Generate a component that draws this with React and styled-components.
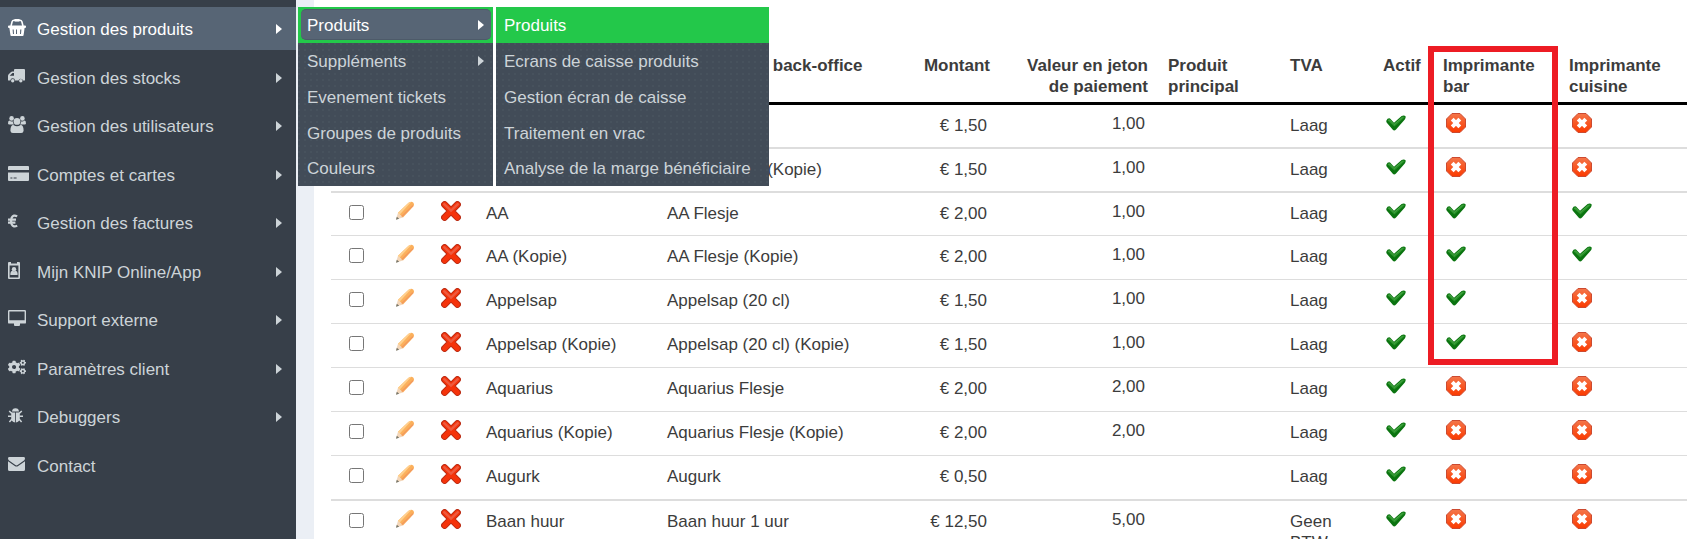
import styled, { createGlobalStyle } from "styled-components";
import { FaCogs } from "react-icons/fa";

const GlobalStyle = createGlobalStyle`
  * { box-sizing: border-box; }
  body {
    margin: 0;
    font: 17px/21px "Liberation Sans", Arial, sans-serif;
    color: #3c3c3c;
    background: #ebeff5;
  }
  a { text-decoration: none; color: inherit; }
`;

const Page = styled.div`
  display: flex;
  height: 100vh;
  overflow: hidden;
`;

const Sidebar = styled.nav`
  flex: 0 0 296px;
  position: relative;
  z-index: 2;
  padding-top: 7px;
  background: #373f49;
`;

const Item = styled.a`
  display: flex;
  align-items: center;
  height: 43px;
  padding: 0 14px 0 8px;
  margin-bottom: 5px;
  color: ${(props) => (props.$active ? "#fff" : "#cdd4d8")};
  background: ${(props) => (props.$active ? "#576575" : "none")};
  &:nth-of-type(odd) { margin-bottom: 6px; }
`;

const ItemIcon = styled.span`
  display: flex;
  width: 29px;
  padding-bottom: 3px;
  svg { display: block; }
`;

const ItemLabel = styled.span`
  flex: 1;
  padding-top: 1px;
`;

const Flyout = styled.div`
  position: absolute;
  top: 7px;
  left: 298px;
  display: flex;
  gap: 3px;
  background: #fff;
`;

const Menu = styled.div`
  min-width: ${(props) => props.$width};
  color: #cdd4d8;
  background-color: #424c58;
  background-image: radial-gradient(circle at 1px 1px, #47525d 1px, transparent 1px);
  background-size: 6px 6px;
`;

const MenuItem = styled.a`
  display: flex;
  align-items: center;
  justify-content: space-between;
  height: 36px;
  padding: 0 9px 0 ${(props) => props.$left || "8px"};
  white-space: nowrap;
  color: ${(props) => (props.$active ? "#fff" : "inherit")};
  background: ${(props) => (props.$active ? "#23c84a" : "none")};
  &:last-child { height: 35px; }
`;

const OpenItem = styled(MenuItem)`
  padding: 2px 2px 3px 3px;
`;

const OpenLabel = styled.span`
  flex: 1;
  align-self: stretch;
  display: flex;
  align-items: center;
  justify-content: space-between;
  padding: 1px 7px 0 6px;
  border: 1px solid #4d5a69;
  border-width: 1px 0;
  border-radius: 5px;
  background: #576575;
`;

const Content = styled.main`
  flex: 1;
  min-width: 0;
  margin-left: 18px;
  padding: 54px 0 0 17px;
  background: #fff;
`;

const Table = styled.table`
  width: 100%;
  table-layout: fixed;
  border-collapse: separate;
  border-spacing: 0;
`;

const Th = styled.th`
  position: relative;
  height: 51px;
  padding: 1px 10px 0;
  vertical-align: top;
  text-align: ${(props) => props.$align || "left"};
  border-bottom: 3px solid #000;
  a { color: #337ab7; }
`;

const Row = styled.tr`
  --top: 10px;
  td { border-top: ${(props) => (props.$heavy ? "2px" : "1px")} solid #ddd; }
  &:first-child td { height: 42px; border-top: 0; }
`;

const Td = styled.td`
  height: 44px;
  padding: var(--top) 10px 0;
  vertical-align: top;
`;

const AmountTd = styled(Td)`
  padding-right: 13px;
  text-align: right;
`;

const TokenTd = styled(AmountTd)`
  padding-top: calc(var(--top) - 2px);
`;

const IconTd = styled(Td)`
  padding: calc(var(--top) - 2px) 0 0 ${(props) => props.$left || "13px"};
  svg { display: block; }
`;

const CheckTd = styled(Td)`
  padding: calc(var(--top) + 2px) 0 0 18px;
`;

const Checkbox = styled.input`
  display: block;
  width: 15px;
  height: 15px;
  margin: 0;
`;

const IconButton = styled.button`
  display: block;
  padding: 0;
  border: 0;
  background: none;
  cursor: pointer;
`;

/* frame drawn over the bar printer column */
const Highlight = styled.div`
  position: absolute;
  top: -8px;
  left: -5px;
  right: 1px;
  height: 319px;
  border: 6px solid #ed1c24;
  z-index: 1;
`;

const Glyph = ({ w, h, children }) => (
  <svg width={w} height={h} viewBox={`0 0 ${w} ${h}`} fill="currentColor" aria-hidden="true">
    {children}
  </svg>
);

const Caret = () => (
  <Glyph w={6} h={12}>
    <path d="M0 1v10l6-5Z" />
  </Glyph>
);

const Basket = () => (
  <Glyph w={18} h={17}>
    <path d="M3 7 4.2 2.4Q4.6 1.2 6 1.2H12Q13.4 1.2 13.8 2.4L15 7" fill="none" stroke="currentColor" strokeWidth="1.6" />
    <path d="M6.5 0h5v2.6h-5Z" />
    <path fillRule="evenodd" d="M1 6.5h16a1 1 0 0 1 1 1v.6a1 1 0 0 1-1 1h-.4L15.6 16a1 1 0 0 1-1 1H3.4a1 1 0 0 1-1-1L1.4 9.1H1a1 1 0 0 1-1-1v-.6a1 1 0 0 1 1-1ZM4.6 10.4 5 15h1l-.3-4.6ZM8 10.4V15h1v-4.6ZM12.2 10.4 12 15h1l.4-4.6Z" />
  </Glyph>
);

const Truck = () => (
  <Glyph w={17} h={14}>
    <path fillRule="evenodd" d="M7 0h9q1 0 1 1v10q0 .6-.6.6H15A2.3 2.3 0 0 0 10.5 11.6H7A2.3 2.3 0 0 0 2.4 11.6H.6Q0 11.6 0 11V7q0-1 .7-1.7L3 3.1Q3.6 2.6 4.4 2.6H6V1q0-1 1-1ZM4.5 4 1.7 6.8H6V4Z" />
    <circle cx="4.7" cy="11.8" r="1.7" />
    <circle cx="12.8" cy="11.8" r="1.7" />
  </Glyph>
);

const Users = () => (
  <Glyph w={18} h={17}>
    <circle cx="3.6" cy="2.4" r="2.3" />
    <circle cx="14.4" cy="2.4" r="2.3" />
    <circle cx="9" cy="5.4" r="3.4" />
    <path d="M0 7.6Q0 4.6 1.4 4.6 3.4 6 4.7 5.2 4.8 7.2 6 8.6H1.4Q0 8.6 0 7.6ZM18 7.6Q18 4.6 16.6 4.6 14.6 6 13.3 5.2 13.2 7.2 12 8.6h4.6Q18 8.6 18 7.6ZM2.4 14.8Q2.4 9 5.4 9 9 11.6 12.6 9q3 0 3 5.8Q15.4 17 13.2 17H4.8Q2.6 17 2.4 14.8Z" />
  </Glyph>
);

const Card = () => (
  <Glyph w={21} h={15}>
    <path d="M1 0h19q1 0 1 1v3H0V1Q0 0 1 0Z" />
    <path fillRule="evenodd" d="M0 6.6h21V14q0 1-1 1H1q-1 0-1-1ZM2.4 11.4v1.2h2v-1.2ZM5.6 11.4v1.2h3v-1.2Z" />
  </Glyph>
);

const Euro = () => (
  <Glyph w={10} h={14}>
    <path d="M9.2 2.4Q5.4.2 3.6 3.8 2.6 7 3.6 10.2 5.4 13.8 9.2 11.6M0 5.6h8M0 8.6h7.4" fill="none" stroke="currentColor" strokeWidth="2.2" />
  </Glyph>
);

const Badge = () => (
  <Glyph w={12} h={17}>
    <path fillRule="evenodd" d="M1 0h2v1.4h6V0h2q1 0 1 1v15q0 1-1 1H1q-1 0-1-1V1Q0 0 1 0ZM1.6 3.4V15.4h8.8V3.4Z" />
    <circle cx="6" cy="7.2" r="2.2" />
    <path d="M2.4 13V11.2Q2.6 9 4.4 8.8q1.6 1 3.2 0 1.8.2 2 2.4V13Z" />
  </Glyph>
);

const Desktop = () => (
  <Glyph w={18} h={16}>
    <path fillRule="evenodd" d="M1.2 0h15.6Q18 0 18 1.2v11.2q0 1.2-1.2 1.2H12V15q0 1-1 1H7q-1 0-1-1v-1.4H1.2Q0 13.6 0 12.4V1.2Q0 0 1.2 0ZM1.4 1.4v8.8h15.2V1.4Z" />
  </Glyph>
);

const Bug = () => (
  <Glyph w={15} h={15}>
    <path d="M4 3.6Q4.2.2 7.5.2T11 3.6ZM3.2 4.6h3.9V14.4Q3.2 14 3.2 10ZM7.9 4.6h3.9V10q0 4-3.9 4.4Z" />
    <path d="M1.2 3 3.8 5.4M13.8 3l-2.6 2.4M0 8.2h3.6M15 8.2h-3.6M1.4 14 4 11M13.6 14 11 11" fill="none" stroke="currentColor" strokeWidth="1.5" />
  </Glyph>
);

const Envelope = () => (
  <Glyph w={17} h={14}>
    <path d="M1.4 0h14.2Q17 0 17 1.4 17 2.6 16 3.4L9.6 8Q8.5 8.8 7.4 8L1 3.4Q0 2.6 0 1.4 0 0 1.4 0Z" />
    <path d="M0 4.2 6.8 9q1.7 1 3.4 0L17 4.2v8.2Q17 14 15.4 14H1.6Q0 14 0 12.4Z" />
  </Glyph>
);

const Check = () => (
  <svg width="20" height="20" viewBox="0 0 20 20" role="img" aria-label="Oui">
    <path d="M.4 7.4Q1.6 4.8 4 5.4L8 9.8 15.6 3Q18.4 1.8 19.7 3.6 19.8 5.4 18.8 6.4L10 16.6Q8.2 18.2 6.8 16.8L.8 9.8Q0 8.6.4 7.4Z" fill="#0b7410" />
    <path d="M1.6 7.6Q2.4 6 3.8 6.6L8 11.2 16.2 3.8Q18 3.2 18.8 4.2L8.4 13.6Z" fill="#2a942b" />
    <path d="M2.4 7.2 3.8 7 8 11.4 16.6 4.2" fill="none" stroke="#55ab50" strokeWidth="0.8" />
  </svg>
);

const Stop = () => (
  <svg width="20" height="20" viewBox="0 0 20 20" role="img" aria-label="Non">
    <defs>
      <linearGradient id="stop" x1="0" y1="0" x2="0" y2="1">
        <stop offset="0" stopColor="#f4764a" />
        <stop offset="1" stopColor="#fb3a00" />
      </linearGradient>
    </defs>
    <path d="M6 .5h8L19.5 6v8L14 19.5H6L.5 14V6Z" fill="url(#stop)" stroke="#cc4a30" />
    <path d="m6.2 6.2 7.6 7.6m0-7.6-7.6 7.6" stroke="#fff" strokeWidth="4" />
  </svg>
);

const Pencil = () => (
  <svg width="20" height="20" viewBox="0 0 20 20">
    <path d="M1 18.6 3 11.8 8 16.4Z" fill="#f2d6ba" />
    <path d="M1 18.8 1.8 15.8 4.2 17.8Z" fill="#77766a" />
    <path d="M3 11.8 13.6 1.8Q16.2-.2 18.2 1.4 19.8 3.6 18 5.8L8 16.4Z" fill="#fbb05c" />
    <path d="M3 11.8 13.6 1.8Q15 .7 16.2 1L4.8 13.4Z" fill="#ffd08e" />
    <path d="M6.8 15.4 18 4.6" stroke="#f39a5e" strokeWidth="1.4" />
  </svg>
);

const Cross = () => (
  <svg width="20" height="20" viewBox="0 0 20 20">
    <path d="M3.6 3.6 16.4 16.4M16.4 3.6 3.6 16.4" stroke="#bb2c14" strokeWidth="7" strokeLinecap="round" />
    <path d="M3.6 3.6 16.4 16.4M16.4 3.6 3.6 16.4" stroke="#f5330a" strokeWidth="5" strokeLinecap="round" />
    <path d="m3.2 3.2 6.8 6.4 6.8-6.4" fill="none" stroke="#ee5a3e" strokeWidth="2.4" strokeLinecap="round" />
  </svg>
);

const sections = [
  { label: "Gestion des produits", icon: <Basket />, active: true },
  { label: "Gestion des stocks", icon: <Truck /> },
  { label: "Gestion des utilisateurs", icon: <Users /> },
  { label: "Comptes et cartes", icon: <Card /> },
  { label: "Gestion des factures", icon: <Euro /> },
  { label: "Mijn KNIP Online/App", icon: <Badge /> },
  { label: "Support externe", icon: <Desktop /> },
  { label: "Paramètres client", icon: <FaCogs size={18} /> },
  { label: "Debuggers", icon: <Bug /> },
  { label: "Contact", icon: <Envelope />, leaf: true },
];

const products = [
  ["7-Up", "7-Up Flesjes", "€ 1,50", "1,00", "Laag", 0, 0],
  ["7-Up (Kopie)", "7-Up Flesjes (Kopie)", "€ 1,50", "1,00", "Laag", 0, 0],
  ["AA", "AA Flesje", "€ 2,00", "1,00", "Laag", 1, 1],
  ["AA (Kopie)", "AA Flesje (Kopie)", "€ 2,00", "1,00", "Laag", 1, 1],
  ["Appelsap", "Appelsap (20 cl)", "€ 1,50", "1,00", "Laag", 1, 0],
  ["Appelsap (Kopie)", "Appelsap (20 cl) (Kopie)", "€ 1,50", "1,00", "Laag", 1, 0],
  ["Aquarius", "Aquarius Flesje", "€ 2,00", "2,00", "Laag", 0, 0],
  ["Aquarius (Kopie)", "Aquarius Flesje (Kopie)", "€ 2,00", "2,00", "Laag", 0, 0],
  ["Augurk", "Augurk", "€ 0,50", "", "Laag", 0, 0],
  ["Baan huur", "Baan huur 1 uur", "€ 12,50", "5,00", "Geen BTW", 0, 0],
];

const heavyRows = [1, 2, 9];
const columns = [54, 46, 45, 181, 233, 110, 158, 122, 93, 60, 126];

export default function App() {
  return (
    <>
      <GlobalStyle />
      <Page>
        <Sidebar>
          {sections.map((s) => (
            <Item key={s.label} href="#" $active={s.active}>
              <ItemIcon>{s.icon}</ItemIcon>
              <ItemLabel>{s.label}</ItemLabel>
              {!s.leaf && <Caret />}
            </Item>
          ))}
          <Flyout>
            <Menu $width="195px">
              <OpenItem href="#" $active>
                <OpenLabel>Produits <Caret /></OpenLabel>
              </OpenItem>
              <MenuItem href="#" $left="9px">
                Suppléments <Caret />
              </MenuItem>
              <MenuItem href="#" $left="9px">Evenement tickets</MenuItem>
              <MenuItem href="#" $left="9px">Groupes de produits</MenuItem>
              <MenuItem href="#" $left="9px">Couleurs</MenuItem>
            </Menu>
            <Menu $width="273px">
              <MenuItem href="#" $active>Produits</MenuItem>
              <MenuItem href="#">Ecrans de caisse produits</MenuItem>
              <MenuItem href="#">Gestion écran de caisse</MenuItem>
              <MenuItem href="#">Traitement en vrac</MenuItem>
              <MenuItem href="#">Analyse de la marge bénéficiaire</MenuItem>
            </Menu>
          </Flyout>
        </Sidebar>
        <Content>
          <Table>
            <colgroup>
              {columns.map((width, i) => (
                <col key={i} width={width} />
              ))}
              <col />
            </colgroup>
            <thead>
              <tr>
                <Th />
                <Th />
                <Th />
                <Th><a href="#">Nom</a></Th>
                <Th>Nom produit back-office</Th>
                <Th $align="right">Montant</Th>
                <Th $align="right">Valeur en jeton de paiement</Th>
                <Th>Produit principal</Th>
                <Th>TVA</Th>
                <Th>Actif</Th>
                <Th>
                  Imprimante bar
                  <Highlight />
                </Th>
                <Th>Imprimante cuisine</Th>
              </tr>
            </thead>
            <tbody>
              {products.map(([name, office, amount, token, vat, bar, kitchen], i) => (
                <Row key={name} $heavy={heavyRows.includes(i)}>
                  <CheckTd><Checkbox type="checkbox" aria-label={name} /></CheckTd>
                  <IconTd $left="10px">
                    <IconButton aria-label="Modifier"><Pencil /></IconButton>
                  </IconTd>
                  <IconTd $left="10px">
                    <IconButton aria-label="Supprimer"><Cross /></IconButton>
                  </IconTd>
                  <Td>{name}</Td>
                  <Td>{office}</Td>
                  <AmountTd>{amount}</AmountTd>
                  <TokenTd>{token}</TokenTd>
                  <Td />
                  <Td>{vat}</Td>
                  <IconTd><Check /></IconTd>
                  <IconTd>{bar ? <Check /> : <Stop />}</IconTd>
                  <IconTd>{kitchen ? <Check /> : <Stop />}</IconTd>
                </Row>
              ))}
            </tbody>
          </Table>
        </Content>
      </Page>
    </>
  );
}
